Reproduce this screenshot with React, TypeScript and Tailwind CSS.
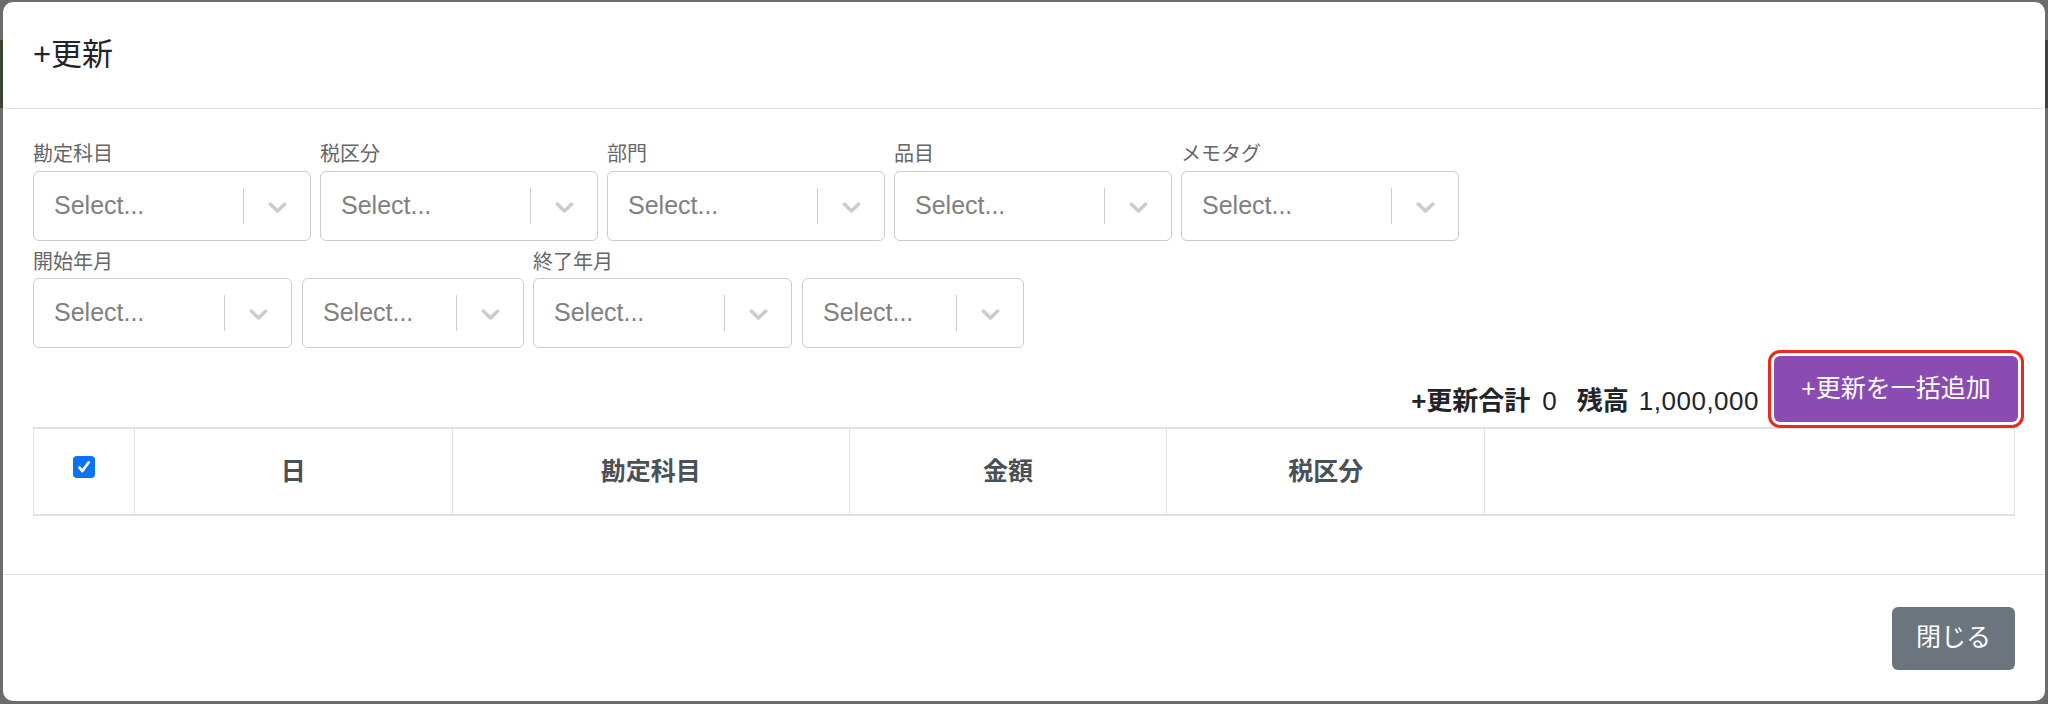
const font = "font-['Liberation_Sans','Noto_Sans_CJK_JP',sans-serif]";

const Chevron = () => (
  <svg width="31" height="31" viewBox="0 0 20 20" fill="#cccccc" aria-hidden="true">
    <path d="M4.516 7.548c0.436-0.446 1.043-0.481 1.576 0l3.908 3.747 3.908-3.747c0.533-0.481 1.141-0.446 1.574 0 0.436 0.445 0.408 1.197 0 1.615-0.406 0.418-4.695 4.502-4.695 4.502-0.217 0.223-0.502 0.335-0.787 0.335s-0.57-0.112-0.789-0.335c0 0-4.287-4.084-4.695-4.502s-0.436-1.17 0-1.615z" />
  </svg>
);

const SelectBox = ({ width }: { width: string }) => (
  <div className={`flex h-[70px] ${width} items-center rounded-[6px] border border-[#cccccc] bg-white`}>
    <span className="flex-1 truncate pl-[20px] text-[25px] text-[#808080]">Select...</span>
    <span className="h-[36px] w-px bg-[#cccccc]" />
    <span className="flex w-[66px] justify-center">
      <Chevron />
    </span>
  </div>
);

const Field = ({ label }: { label: string }) => (
  <div className="flex flex-col">
    <label className="mb-[3px] text-[20px] leading-[27px] text-[#666666]">{label}</label>
    <SelectBox width="w-[278px]" />
  </div>
);

const RangeField = ({ label }: { label: string }) => (
  <div className="flex flex-col">
    <label className="mb-[2px] text-[20px] leading-[27px] text-[#666666]">{label}</label>
    <div className="flex gap-[10px]">
      <SelectBox width="w-[259px]" />
      <SelectBox width="w-[222px]" />
    </div>
  </div>
);

const columns = [
  { title: "日", w: "w-[318px]" },
  { title: "勘定科目", w: "w-[397px]" },
  { title: "金額", w: "w-[318px]" },
  { title: "税区分", w: "w-[318px]" },
  { title: "", w: "w-[530px]" },
];

export default function App() {
  return (
    <div className={`relative h-[704px] w-[2048px] overflow-hidden bg-[#6c6c6c] ${font}`}>
      {/* dimmed page behind the modal */}
      <div className="mt-[40px] h-[68px] bg-[#3c4531]" />

      <div className="absolute bottom-[3px] left-[3px] right-[3px] top-[2px] flex flex-col rounded-[10px] bg-white">
        <div className="flex h-[107px] items-center border-b border-[#dee2e6] px-[30px]">
          <h5 className="text-[31px] text-[#212529]">+更新</h5>
        </div>

        <div className="flex-1 px-[30px] pt-[32px]">
          <div className="flex gap-[9px]">
            <Field label="勘定科目" />
            <Field label="税区分" />
            <Field label="部門" />
            <Field label="品目" />
            <Field label="メモタグ" />
          </div>

          <div className="mt-[8px] flex gap-[9px]">
            <RangeField label="開始年月" />
            <RangeField label="終了年月" />
          </div>

          <div className="mt-[8px] flex items-end justify-end gap-[15px]">
            <div className="mb-[1px] text-[26px] text-[#212529]">
              <span className="font-bold">+更新合計</span>
              <span className="ml-[12px]">0</span>
              <span className="ml-[20px] font-bold">残高</span>
              <span className="ml-[10px] tracking-[0.5px]">1,000,000</span>
            </div>
            <button className="mr-[-3px] h-[66px] w-[244px] rounded-[6px] bg-[#8a4cb2] text-[25px] text-white outline-[3px] outline-offset-[3px] outline-[#ea2a1f] outline-solid">
              +更新を一括追加
            </button>
          </div>

          <table className="mt-[5px] w-[1982px] border-collapse text-[25px]">
            <thead>
              <tr className="h-[87px] border-y-2 border-[#dee2e6]">
                <th className="w-[101px] border-x border-[#dee2e6] align-middle">
                  <span className="mx-auto mb-[10px] flex h-[22px] w-[22px] items-center justify-center rounded-[4px] bg-[#0b73f2]">
                    <svg width="16" height="16" viewBox="0 0 14 14" fill="none">
                      <path d="M3 7.5l2.6 3L11 3" stroke="white" strokeWidth="2.4" strokeLinecap="round" strokeLinejoin="round" />
                    </svg>
                  </span>
                </th>
                {columns.map((c, i) => (
                  <th key={i} className={`${c.w} border-x border-[#dee2e6] text-center font-bold text-[#495057]`}>
                    {c.title}
                  </th>
                ))}
              </tr>
            </thead>
          </table>
        </div>

        <div className="flex h-[127px] items-center justify-end border-t border-[#dee2e6] px-[30px]">
          <button className="h-[63px] w-[123px] rounded-[6px] bg-[#6c757d] text-[25px] text-white">閉じる</button>
        </div>
      </div>
    </div>
  );
}
